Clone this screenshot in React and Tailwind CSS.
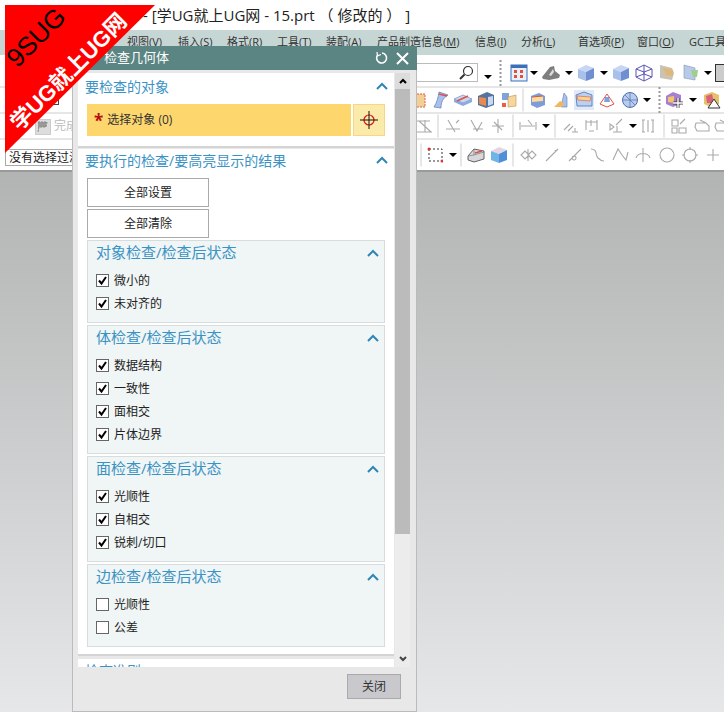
const F = { fontFamily: '"Open Sans","Noto Sans CJK SC",sans-serif' };

const Chevron = ({ className = "" }) => (
  <svg width="12" height="8" viewBox="0 0 12 8" className={className}>
    <path d="M1 7 L6 2 L11 7" fill="none" stroke="#2f86b5" strokeWidth="2" />
  </svg>
);

const Check = ({ on, label }) => (
  <div className="flex items-center h-[23px] pl-[8px]">
    <span className="w-[13px] h-[13px] border border-[#666] bg-white flex items-center justify-center">
      {on && (
        <svg width="11" height="11" viewBox="0 0 11 11">
          <path d="M2 5.5 L4.5 8.5 L9 2" fill="none" stroke="#000" strokeWidth="2" />
        </svg>
      )}
    </span>
    <span className="ml-[5px] text-[12px] text-[#222]">{label}</span>
  </div>
);

const Group = ({ title, items, h, mt }) => (
  <div className={`border border-[#d8dcdc] bg-[#f0f5f6] ${h} ${mt}`}>
    <div className="flex items-center justify-between h-[23px] pl-[8px] pr-[5px]">
      <span className="text-[15px] text-[#3a93c4]">{title}</span>
      <Chevron />
    </div>
    <div className="mt-[5px]">
      {items.map((i) => (
        <Check key={i[0]} label={i[0]} on={i[1]} />
      ))}
    </div>
  </div>
);

const Cube = ({ c1 = "#a9c0ea", c2 = "#6f8fd0", c3 = "#c6d6f4" }) => (
  <svg width="18" height="18" viewBox="0 0 18 18">
    <path d="M1 5 L9 1 L17 4 L9 8 Z" fill={c3} />
    <path d="M1 5 L9 8 L9 17 L1 14 Z" fill={c1} />
    <path d="M17 4 L9 8 L9 17 L17 14 Z" fill={c2} />
  </svg>
);
const Wire = () => (
  <svg width="18" height="18" viewBox="0 0 18 18" fill="none" stroke="#5a55b5" strokeWidth="1">
    <path d="M1 5 L9 1 L17 5 L17 13 L9 17 L1 13 Z M1 5 L9 8 L17 5 M9 8 L9 17 M1 13 L9 10 L17 13 M9 1 L9 10" />
  </svg>
);
const Grid = () => (
  <svg width="18" height="18" viewBox="0 0 18 18">
    <rect x="1" y="1" width="16" height="16" fill="#eaf0fa" stroke="#3d6fb8" />
    <rect x="1" y="1" width="16" height="3" fill="#3d6fb8" />
    <path d="M4 6h3v3H4zM10 6h3v3h-3zM4 11h3v3H4zM10 11h3v3h-3z" fill="#e0523f" />
  </svg>
);
const Shade = () => (
  <svg width="20" height="18" viewBox="0 0 20 18">
    <path d="M1 13 L9 3 L13 2 L14 7 L19 11 L18 14 L8 16 L2 15 Z" fill="#7e7e7e" />
    <path d="M8 11 L12 5 L13 8 L10 12 Z" fill="#ddd" />
  </svg>
);
const Tan = () => (
  <svg width="18" height="18" viewBox="0 0 18 18">
    <path d="M2 1 L14 4 L16 9 L14 16 L2 14 Z" fill="#c9c3b5" />
    <path d="M5 4 L15 6 L15 12 L8 11 Z" fill="#e1b777" />
  </svg>
);
const Teal = () => (
  <svg width="18" height="18" viewBox="0 0 18 18">
    <path d="M2 1 L13 4 L13 16 L2 14 Z" fill="#b7cbe8" stroke="#7f94b8" strokeWidth=".6" />
    <path d="M9 6 L16 6 L15 13 L11 13 Z" fill="#9fcf8d" />
  </svg>
);
const Box = () => <span className="block w-[16px] h-[18px] border border-[#333] bg-[#ccc]" />;
const RedCut = () => (
  <svg width="20" height="18" viewBox="0 0 20 18">
    <path d="M1 8 L10 4 L19 8 L10 12 Z" fill="#c6d8f2" stroke="#6e8ccb" strokeWidth=".7" />
    <path d="M1 8 L1 11 L10 15 L19 11 L19 8 L10 12 Z" fill="#8daadf" />
    <path d="M4 10 L15 5" stroke="#e2503f" strokeWidth="1.5" />
  </svg>
);
const GrayCut = () => (
  <svg width="20" height="18" viewBox="0 0 20 18">
    <path d="M2 10 L8 3 L18 5 L18 13 L8 16 L2 14 Z" fill="#d8d8dc" stroke="#555" strokeWidth=".9" />
    <path d="M8 3 L8 9 L2 10 M8 9 L18 6" fill="none" stroke="#777" strokeWidth=".7" />
    <path d="M9 7 L16 5" stroke="#e2503f" strokeWidth="1.5" />
  </svg>
);
const Dotted = () => (
  <svg width="14" height="18" viewBox="0 0 14 18">
    <rect x="1" y="3" width="11" height="13" fill="#f3cf96" stroke="#d9604a" strokeDasharray="2 1" />
  </svg>
);
const Orange = () => (
  <svg width="18" height="18" viewBox="0 0 18 18">
    <path d="M1 5 L10 1 L17 4 L17 14 L9 17 L1 14 Z" fill="#54749f" />
    <path d="M2 6 L9 7 L9 15 L2 13 Z" fill="#e9894c" />
    <path d="M11 6 L16 5 L16 13 L11 15 Z" fill="#c9d7f0" />
  </svg>
);
const BlueOrange = () => (
  <svg width="18" height="18" viewBox="0 0 18 18">
    <path d="M2 2 H9 V9 H2 Z" fill="#7fa4dc" />
    <path d="M8 6 L16 4 V15 L8 16 Z" fill="#f4d79a" stroke="#c98a55" strokeWidth=".6" />
    <path d="M2 12 H6 V16 H2 Z" fill="#e8613f" />
  </svg>
);
const Yel = () => (
  <svg width="18" height="18" viewBox="0 0 18 18">
    <path d="M2 5 L10 2 L16 5 L16 14 L8 17 L2 14 Z" fill="#7f9bd8" />
    <path d="M3 6 L14 5 L14 10 L3 11 Z" fill="#f7de9c" />
    <path d="M3 6 L14 5" stroke="#e2503f" />
  </svg>
);
const Corner = () => (
  <svg width="18" height="18" viewBox="0 0 18 18">
    <path d="M12 2 L15 6 L15 16 L9 16 Z" fill="#a9c0ea" stroke="#5c7ac0" strokeWidth=".6" />
    <path d="M2 16 L8 10 L12 12 L10 16 Z" fill="#f0b75c" />
  </svg>
);
const Lit = () => (
  <svg width="20" height="20" viewBox="0 0 20 20">
    <rect x="0" y="0" width="20" height="20" fill="#dfe9f8" />
    <path d="M2 5 L10 2 L18 5 L18 16 L3 16 Z" fill="#bcd0f0" stroke="#4c6eb5" strokeWidth=".8" />
    <path d="M3 6 L17 7 L16 11 L4 10 Z" fill="#f5d48e" stroke="#e2503f" strokeWidth=".6" />
  </svg>
);
const Swoop = () => (
  <svg width="18" height="20" viewBox="0 0 18 20">
    <path d="M7 2 L16 5 C11 8 9 12 9 18 L2 17 C5 12 6 8 7 2 Z" fill="#a9c0ea" stroke="#5c7ac0" strokeWidth=".7" />
    <path d="M7 4 L15 6" stroke="#e2503f" strokeWidth="1.5" />
  </svg>
);
const Cone = () => (
  <svg width="18" height="18" viewBox="0 0 18 18" fill="none">
    <path d="M2 13 L9 3 L16 13 L9 16 Z" stroke="#e2503f" />
    <path d="M7 6 L11 6 L12 11 L6 11 Z" fill="#7fa2dd" />
  </svg>
);
const Ball = () => (
  <svg width="18" height="18" viewBox="0 0 18 18">
    <circle cx="9" cy="9" r="7.5" fill="#b8cced" stroke="#4f6fae" />
    <path d="M2 9 H16 M9 2 V16 M4 4 L14 14" stroke="#4f6fae" strokeWidth=".7" />
  </svg>
);
const Plus = () => (
  <svg width="22" height="20" viewBox="0 0 22 20">
    <path d="M2 6 L9 2 L17 5 L17 14 L9 17 L2 14 Z" fill="#a77fd0" />
    <path d="M4 7 L10 6 L10 13 L4 12 Z" fill="#f2c46c" />
    <path d="M14 8 V18 M9 13 H19" stroke="#444" strokeWidth="3" />
    <path d="M14 8 V18 M9 13 H19" stroke="#fff" strokeWidth="1.4" />
  </svg>
);
const Warn = () => (
  <svg width="20" height="20" viewBox="0 0 20 20">
    <path d="M2 5 L10 2 L17 5 L17 14 L9 17 L2 14 Z" fill="#e6c06a" />
    <path d="M4 6 L10 4 L12 13 L5 13 Z" fill="#d9607a" />
    <path d="M12 9 L18 18 L6 18 Z" fill="#fff" stroke="#333" />
  </svg>
);
const Rect4 = () => (
  <svg width="16" height="16" viewBox="0 0 16 16">
    <rect x="2" y="2" width="13" height="12" fill="none" stroke="#333" strokeDasharray="2 2" />
    <circle cx="2" cy="2" r="1.5" fill="#d33" />
    <circle cx="15" cy="14" r="1.5" fill="#d33" />
  </svg>
);
const G = ({ d, w = 18 }) => (
  <svg width={w} height="18" viewBox={`0 0 ${w} 18`} fill="none" stroke="#a9a9a9" strokeWidth="1.1">
    <path d={d} />
  </svg>
);
const g = {
  tri: "M1 4 H15 M4 4 L16 15 M0 15 H17 M10 3 V15",
  a: "M4 3 L11 15 M2 12 H16 M12 6 l3 -3",
  b: "M4 3 L10 14 L15 5 M6 12 H16",
  c: "M9 2 V16 M3 9 H15 M5 5 L13 13",
  d: "M1 5 V13 M17 5 V13 M2 9 H16 M9 3 L13 8",
  e: "M3 13 L9 7 M7 14 L12 9 M11 15 H17 M14 11 V15",
  f: "M3 3 V13 M14 3 V13 M3 5 H14 M8 3 V9 M6 14 H11",
  h: "M2 7 L6 10 L2 13 Z M5 15 H14 M9 15 V9 M8 8 L14 2",
  i: "M3 3 H6 M3 15 H6 M4 3 V15 M12 3 H15 M12 15 H15 M14 3 V15 M9 3 V15",
  j: "M2 3 H8 V9 H2 Z M2 11 H7 V16 H2 Z M9 11 H16 V16 H9 Z M10 7 L15 2",
  k: "M3 6 H13 L16 9 V14 H4 L2 10 Z M7 3 L13 6",
  l: "M2 9 L6 5 L10 9 L6 13 Z M9 9 L13 5 L17 9 L13 13 Z M9 3 V15",
  m: "M3 15 L15 3 M12 4 a1 1 0 1 0 2 0",
  n: "M3 15 L15 3 M8 10 a2 2 0 1 0 .1 0",
  o: "M3 3 C10 3 7 10 10 12 C12 14 13 15 16 15",
  p: "M2 14 L7 3 L11 9 L15 14 L17 6",
  q: "M9 2 V16 M2 12 C4 6 14 6 16 12",
  r: "M9 9 m-7 0 a7 7 0 1 0 14 0 a7 7 0 1 0 -14 0 M9 9 h.1",
  s: "M9 9 m-6 0 a6 6 0 1 0 12 0 a6 6 0 1 0 -12 0 M9 1 V4 M9 14 V17 M1 9 H4 M14 9 H17",
  t: "M9 3 V15 M3 9 H15",
};
const Arrow = () => <span className="block w-0 h-0 border-x-[4px] border-x-transparent border-t-[4px] border-t-black" />;
const Sep = () => <span className="block w-px h-[23px] bg-[#d0d0d0]" />;
const Grip = () => <span className="block w-[3px] h-[26px] border-l-2 border-dotted border-[#999]" />;

const ar = <Arrow />, sp = <Sep />, gr = <Grip />;

const row1 = [
  [488, <span className="block mt-[8px]"><Arrow /></span>], [501, gr], [519, <Grid />], [534, ar], [551, <Shade />], [569, ar],
  [586, <Cube />], [604, ar], [621, <Cube />], [644, <Wire />], [667, <Tan />], [691, <Teal />], [708, ar], [723, <Box />],
];
const row2 = [
  [420, <Dotted />], [441, <Swoop />], [463, <RedCut />], [486, <Orange />], [509, <BlueOrange />], [523, sp], [538, <Yel />],
  [561, <Corner />], [584, <Lit />], [607, <Cone />], [630, <Ball />], [647, ar], [660, gr], [675, <Plus />], [693, ar], [712, <Warn />],
];
const row3 = [
  [424, <G d={g.tri} />], [438, sp], [453, <G d={g.a} />], [476, <G d={g.b} />], [498, <G d={g.c} />], [513, sp], [528, <G d={g.d} />],
  [546, ar], [555, sp], [570, <G d={g.e} />], [592, <G d={g.f} />], [617, <G d={g.h} />], [633, ar], [648, <G d={g.i} />], [664, sp],
  [679, <G d={g.j} />], [702, <G d={g.k} />], [722, <G d={g.k} />],
];
const row4 = [
  [421, sp], [435, <Rect4 />], [453, ar], [461, sp], [476, <GrayCut />], [499, <Cube c1="#6fb4e4" c2="#4e8fd8" c3="#e4d4e4" />], [513, sp],
  [528, <G d={g.l} />], [552, <G d={g.m} />], [575, <G d={g.n} />], [597, <G d={g.o} />], [620, <G d={g.p} />], [643, <G d={g.q} />],
  [667, <G d={g.r} />], [690, <G d={g.s} />], [713, <G d={g.t} />],
];

const Items = ({ items, top = "top-1/2" }) =>
  items.map(([x, n], i) => (
    <span key={i} className={`absolute ${top} -translate-x-1/2 -translate-y-1/2 flex`} style={{ left: x }}>
      {n}
    </span>
  ));

const Menu = ({ w, name, k }) => (
  <span className={`shrink-0 ${w}`}>
    {name}(<span className="underline">{k}</span>)
  </span>
);

export default function App() {
  return (
    <div style={F} className="relative w-[724px] h-[712px] overflow-hidden flex flex-col">
      {/* title */}
      <div className="h-[30px] bg-white pl-[143px] text-[15px] leading-[31px] text-[#222] whitespace-pre shrink-0">- [学UG就上UG网 - 15.prt （ 修改的 ） ]</div>
      {/* menu */}
      <div className="h-[25px] shrink-0 bg-[#c5d6d4] flex items-center text-[11px] text-[#333] pl-[127px] whitespace-nowrap">
        <Menu w="w-[51px]" name="视图" k="V" />
        <Menu w="w-[49px]" name="插入" k="S" />
        <Menu w="w-[50px]" name="格式" k="R" />
        <Menu w="w-[49px]" name="工具" k="T" />
        <Menu w="w-[51px]" name="装配" k="A" />
        <Menu w="w-[98px]" name="产品制造信息" k="M" />
        <Menu w="w-[46px]" name="信息" k="I" />
        <Menu w="w-[57px]" name="分析" k="L" />
        <Menu w="w-[59px]" name="首选项" k="P" />
        <Menu w="w-[52px]" name="窗口" k="O" />
        <span className="shrink-0 w-[35px] overflow-hidden">GC工具箱</span>
      </div>
      {/* toolbars */}
      <div className="bg-white border-b-2 border-[#9a9a9a] h-[117px] shrink-0 flex flex-col">
        <div className="relative h-[33px] border-b-2 border-[#e6e6e6]">
          <div className="absolute left-[350px] top-[8px] w-[128px] h-[19px] border border-[#bbb] bg-white flex justify-end items-center pr-[3px]">
            <svg width="16" height="16" viewBox="0 0 16 16" fill="none" stroke="#333" strokeWidth="1.2">
              <circle cx="10" cy="6" r="4.5" />
              <path d="M6.5 9.5 L2 14" strokeWidth="2" />
            </svg>
          </div>
          <Items items={row1} top="top-[18px]" />
        </div>
        <div className="relative h-[26px] border-b-2 border-[#e6e6e6]">
          <span className="absolute left-[50px] top-[7px] w-[9px] h-[10px] border border-[#444]" />
          <Items items={row2} />
        </div>
        <div className="relative h-[26px] border-b-2 border-[#e6e6e6]">
          <svg width="16" height="16" viewBox="0 0 16 16" className="absolute left-[35px] top-[5px]">
            <rect x=".5" y=".5" width="15" height="15" fill="#ddd" stroke="#ccc" />
            <path d="M3 3 H12 L11 8 H4 L3 13" fill="#999" stroke="#888" strokeDasharray="2 1" />
          </svg>
          <span className="absolute left-[54px] top-[3px] text-[12px] text-[#bbb]">完成</span>
          <Items items={row3} />
        </div>
        <div className="relative flex-1">
          <div className="absolute left-[5px] top-[9px] w-[80px] h-[17px] border border-[#aaa] bg-white text-[12px] leading-[15px] text-[#222] pl-[3px] whitespace-nowrap overflow-hidden">没有选择过滤器</div>
          <Items items={row4} />
        </div>
      </div>
      {/* empty graphics window */}
      <div className="flex-1 bg-gradient-to-b from-[#b2b3b3] to-[#e6e7e8]" />

      {/* dialog */}
      <div className="absolute left-[72px] top-[46px] w-[345px] h-[666px] bg-[#e8e8e8] border border-[#bbb] flex flex-col">
        <div className="h-[24px] -mx-px -mt-px bg-[#5a8582] flex items-center text-white text-[13px] pl-[32px] shrink-0">
          <span className="flex-1">检查几何体</span>
          <svg width="14" height="14" viewBox="0 0 14 14" fill="none" stroke="#fff" strokeWidth="1.6" className="mr-[7px]">
            <path d="M3 3.5 A5 5 0 1 0 7 2" />
            <path d="M2 1 L2.5 5 L6 3.5" strokeWidth="1.2" />
          </svg>
          <svg width="13" height="13" viewBox="0 0 13 13" stroke="#fff" strokeWidth="2" className="mr-[8px]">
            <path d="M1 1 L12 12 M12 1 L1 12" />
          </svg>
        </div>
        <div className="flex-1 min-h-0 flex overflow-hidden pl-[5px] pt-[3px]">
          <div className="w-[316px] shrink-0">
            <div className="bg-white h-[75px] border-b-2 border-[#d4d4d4] px-[9px]">
              <div className="flex items-center justify-between h-[26px] -ml-[2px] -mr-[3px]">
                <span className="text-[14px] text-[#3a93c4]">要检查的对象</span>
                <Chevron />
              </div>
              <div className="flex gap-[2px] mt-[5px]">
                <div className="w-[264px] h-[32px] bg-[#fdd66e] flex items-center pl-[7px] text-[12px] text-[#333]">
                  <span className="text-[#b81010] text-[17px] leading-[15px] mr-[4px] font-bold">*</span>选择对象 (0)
                </div>
                <div className="w-[32px] h-[32px] bg-[#faebaa] border border-[#f8d77e] flex items-center justify-center">
                  <svg width="20" height="20" viewBox="0 0 20 20" fill="none">
                    <circle cx="10" cy="10" r="5" stroke="#e0101a" strokeWidth="1.2" />
                    <path d="M10 1 V19 M1 10 H19" stroke="#111" />
                  </svg>
                </div>
              </div>
            </div>
            <div className="bg-white mt-[1px] h-[507px] border-b-2 border-[#d4d4d4] px-[9px]">
              <div className="flex items-center justify-between h-[22px] -ml-[2px] -mr-[3px]">
                <span className="text-[14px] text-[#3a93c4]">要执行的检查/要高亮显示的结果</span>
                <Chevron />
              </div>
              <div className="mt-[7px] w-[122px] h-[29px] border border-[#aaa] flex items-center justify-center text-[12px] text-[#222]">全部设置</div>
              <div className="mt-[2px] w-[122px] h-[29px] border border-[#aaa] flex items-center justify-center text-[12px] text-[#222]">全部清除</div>
              <Group mt="mt-[2px]" h="h-[83px]" title="对象检查/检查后状态" items={[["微小的", true], ["未对齐的", true]]} />
              <Group mt="mt-[2px]" h="h-[129px]" title="体检查/检查后状态" items={[["数据结构", true], ["一致性", true], ["面相交", true], ["片体边界", true]]} />
              <Group mt="mt-[2px]" h="h-[106px]" title="面检查/检查后状态" items={[["光顺性", true], ["自相交", true], ["锐刺/切口", true]]} />
              <Group mt="mt-[2px]" h="h-[83px]" title="边检查/检查后状态" items={[["光顺性", false], ["公差", false]]} />
            </div>
            <div className="bg-white mt-[3px] h-[40px] pl-[7px] pt-[2px] text-[14px] leading-[20px] text-[#3a93c4]">检查准则</div>
          </div>
          <div className="ml-px w-[15px] flex flex-col bg-[#ececec]">
            <div className="h-[16px] flex items-center justify-center shrink-0 bg-[#dcdcdc]">
              <svg width="8" height="6" viewBox="0 0 8 6"><path d="M1 5 L4 2 L7 5" fill="none" stroke="#000" strokeWidth="2" /></svg>
            </div>
            <div className="h-[445px] bg-[#bbbbbb] shrink-0" />
            <div className="flex-1" />
            <div className="h-[16px] flex items-center justify-center shrink-0">
              <svg width="8" height="6" viewBox="0 0 8 6"><path d="M1 1 L4 4 L7 1" fill="none" stroke="#444" strokeWidth="2" /></svg>
            </div>
          </div>
        </div>
        <div className="h-[44px] shrink-0 relative flex justify-end items-start pr-[15px] pt-[7px]">
          <div className="w-[54px] h-[25px] bg-[#c9c9cd] border border-[#aaa] flex items-center justify-center text-[12px] text-[#333]">关闭</div>
        </div>
      </div>

      {/* ribbon */}
      <div className="absolute left-[5px] top-[5px] w-[150px] h-[148px] bg-[#ff0000] [clip-path:polygon(0_0,100%_0,0_100%)]">
        <div className="absolute left-[-14px] top-[18px] w-[90px] text-center -rotate-45 text-[26px] leading-[28px] text-black" style={{ fontFamily: '"Liberation Sans",sans-serif' }}>9SUG</div>
        <div className="absolute left-[-16px] top-[52px] w-[160px] text-center -rotate-45 text-[22px] leading-[30px] font-bold text-white whitespace-nowrap" style={{ fontFamily: '"Liberation Sans","Noto Sans CJK SC",sans-serif' }}>学UG就上UG网</div>
      </div>
    </div>
  );
}
